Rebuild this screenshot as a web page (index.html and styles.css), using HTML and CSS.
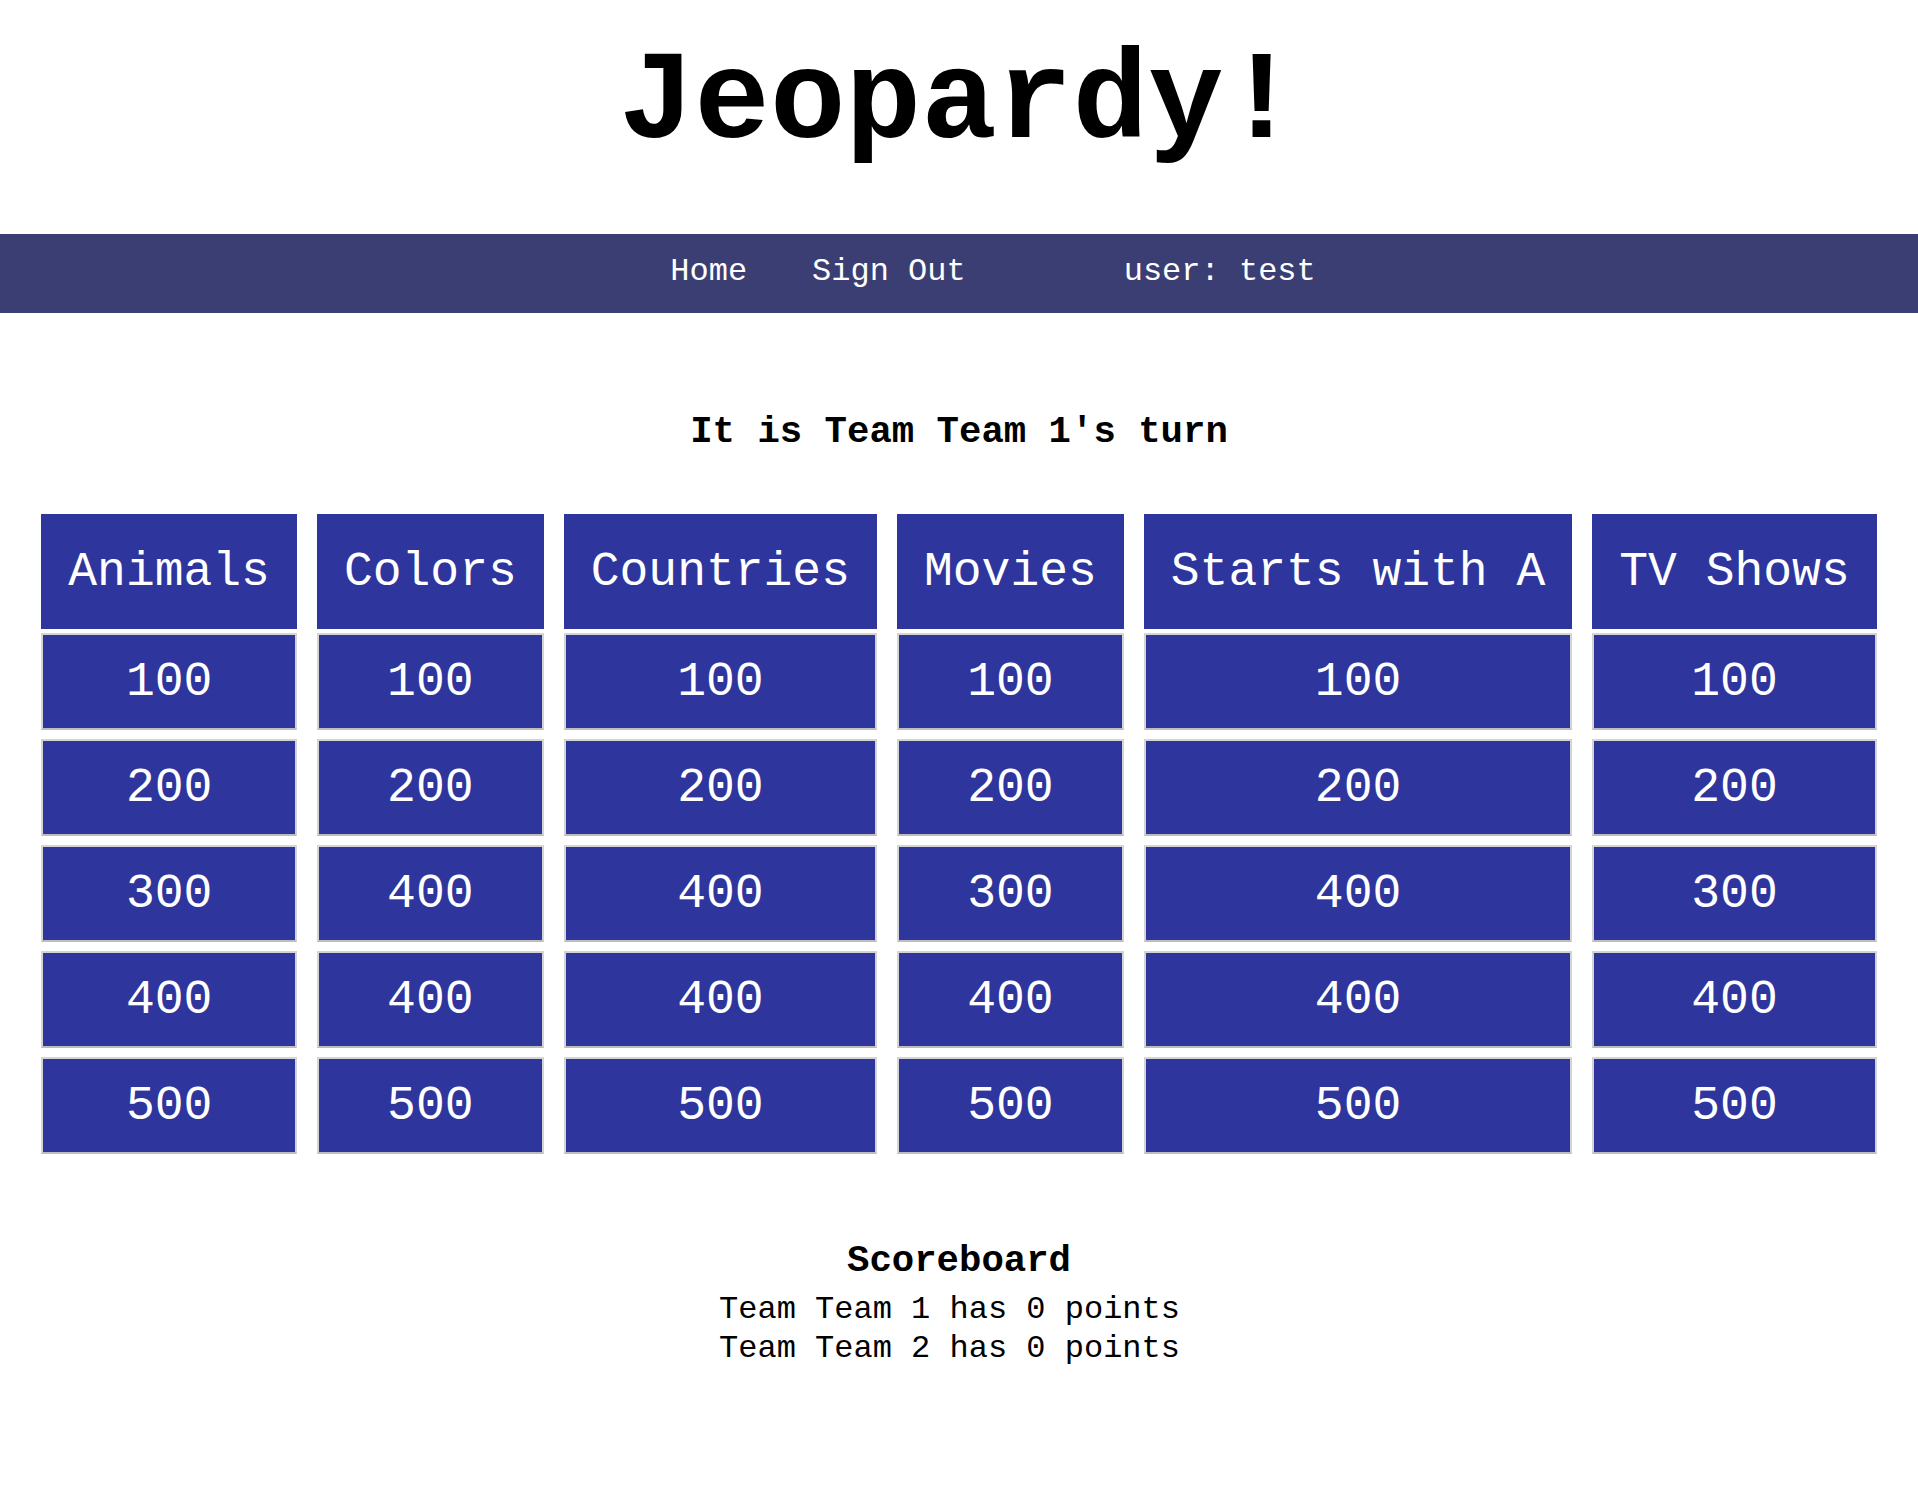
FILE: index.html
```html
<!DOCTYPE html>
<html lang="en">
  <head>
    <meta charset="UTF-8" />
    <meta name="viewport" content="width=device-width, initial-scale=1.0" />
    <title>Jeopardy!</title>
    <link rel="stylesheet" href="styles.css">
  </head>
  <body>
    <!-- title -->
    <h1 class="title">Jeopardy!</h1>

    <!-- navbar -->
    <nav class="navbar">
      <a href="#" class="nav-link">Home</a>
      <a href="#" class="nav-link">Sign Out</a>
      <span class="nav-user">user: test</span>
    </nav>

    <h2 class="turn">It is Team Team 1's turn</h2>

    <!-- game board -->
    <table class="board">
      <tr>
        <th class="category">Animals</th>
        <th class="category">Colors</th>
        <th class="category">Countries</th>
        <th class="category">Movies</th>
        <th class="category">Starts with A</th>
        <th class="category">TV Shows</th>
      </tr>
      <tr>
        <td class="cell"><div class="clue">100</div></td>
        <td class="cell"><div class="clue">100</div></td>
        <td class="cell"><div class="clue">100</div></td>
        <td class="cell"><div class="clue">100</div></td>
        <td class="cell"><div class="clue">100</div></td>
        <td class="cell"><div class="clue">100</div></td>
      </tr>
      <tr>
        <td class="cell"><div class="clue">200</div></td>
        <td class="cell"><div class="clue">200</div></td>
        <td class="cell"><div class="clue">200</div></td>
        <td class="cell"><div class="clue">200</div></td>
        <td class="cell"><div class="clue">200</div></td>
        <td class="cell"><div class="clue">200</div></td>
      </tr>
      <tr>
        <td class="cell"><div class="clue">300</div></td>
        <td class="cell"><div class="clue">400</div></td>
        <td class="cell"><div class="clue">400</div></td>
        <td class="cell"><div class="clue">300</div></td>
        <td class="cell"><div class="clue">400</div></td>
        <td class="cell"><div class="clue">300</div></td>
      </tr>
      <tr>
        <td class="cell"><div class="clue">400</div></td>
        <td class="cell"><div class="clue">400</div></td>
        <td class="cell"><div class="clue">400</div></td>
        <td class="cell"><div class="clue">400</div></td>
        <td class="cell"><div class="clue">400</div></td>
        <td class="cell"><div class="clue">400</div></td>
      </tr>
      <tr>
        <td class="cell"><div class="clue">500</div></td>
        <td class="cell"><div class="clue">500</div></td>
        <td class="cell"><div class="clue">500</div></td>
        <td class="cell"><div class="clue">500</div></td>
        <td class="cell"><div class="clue">500</div></td>
        <td class="cell"><div class="clue">500</div></td>
      </tr>
    </table>

    <!-- scores -->
    <div class="scoreboard">
      <h3 class="score-title">Scoreboard</h3>
      <p class="score">Team Team 1 has 0 points</p>
      <p class="score">Team Team 2 has 0 points</p>
    </div>
  </body>
</html>
```

FILE: styles.css
```css
body {
  margin: 0;
  font-family: "Courier New", "Liberation Mono", monospace;
  color: black;
  background: white;
}

.title {
  margin: 0 0 55px 0;
  padding-top: 29px;
  font-size: 126px;
  line-height: 150px;
  font-weight: bold;
  text-align: center;
}

/* navbar */
.navbar {
  display: flex;
  justify-content: center;
  padding: 20px 0 23px 68px;
  background-color: #3b3e72;
  font-size: 32px;
  line-height: 36px;
}
.nav-link {
  color: white;
  text-decoration: none;
  margin-right: 65px;
}
.nav-user {
  color: white;
  margin-left: 93px;
}

.turn {
  margin: 98px 0 0 0;
  font-size: 37.33px;
  line-height: 42px;
  text-align: center;
}

/* board */
.board {
  margin: 61px auto 0 auto;
  border-collapse: separate;
  border-spacing: 20px 0;
}
.category {
  height: 114px;
  padding: 1px 27px 0 27px;
  background-color: #2e359d;
  color: white;
  font-size: 48px;
  font-weight: normal;
  white-space: nowrap;
}
.cell {
  padding: 4px 0 5px 0;
}
.clue {
  height: 92px;
  padding-top: 1px;
  display: flex;
  align-items: center;
  justify-content: center;
  background-color: #2e359d;
  border: 2px solid #d4d4d4;
  border-bottom-color: #bdbdbd;
  color: white;
  font-size: 48px;
  cursor: pointer;
}

/* scoreboard */
.scoreboard {
  margin-top: 81px;
  text-align: center;
}
.score-title {
  margin: 0 0 8px 0;
  font-size: 37.33px;
  line-height: 42px;
}
.score {
  margin: 0;
  padding-right: 19px;
  font-size: 32px;
  line-height: 39px;
}
```
